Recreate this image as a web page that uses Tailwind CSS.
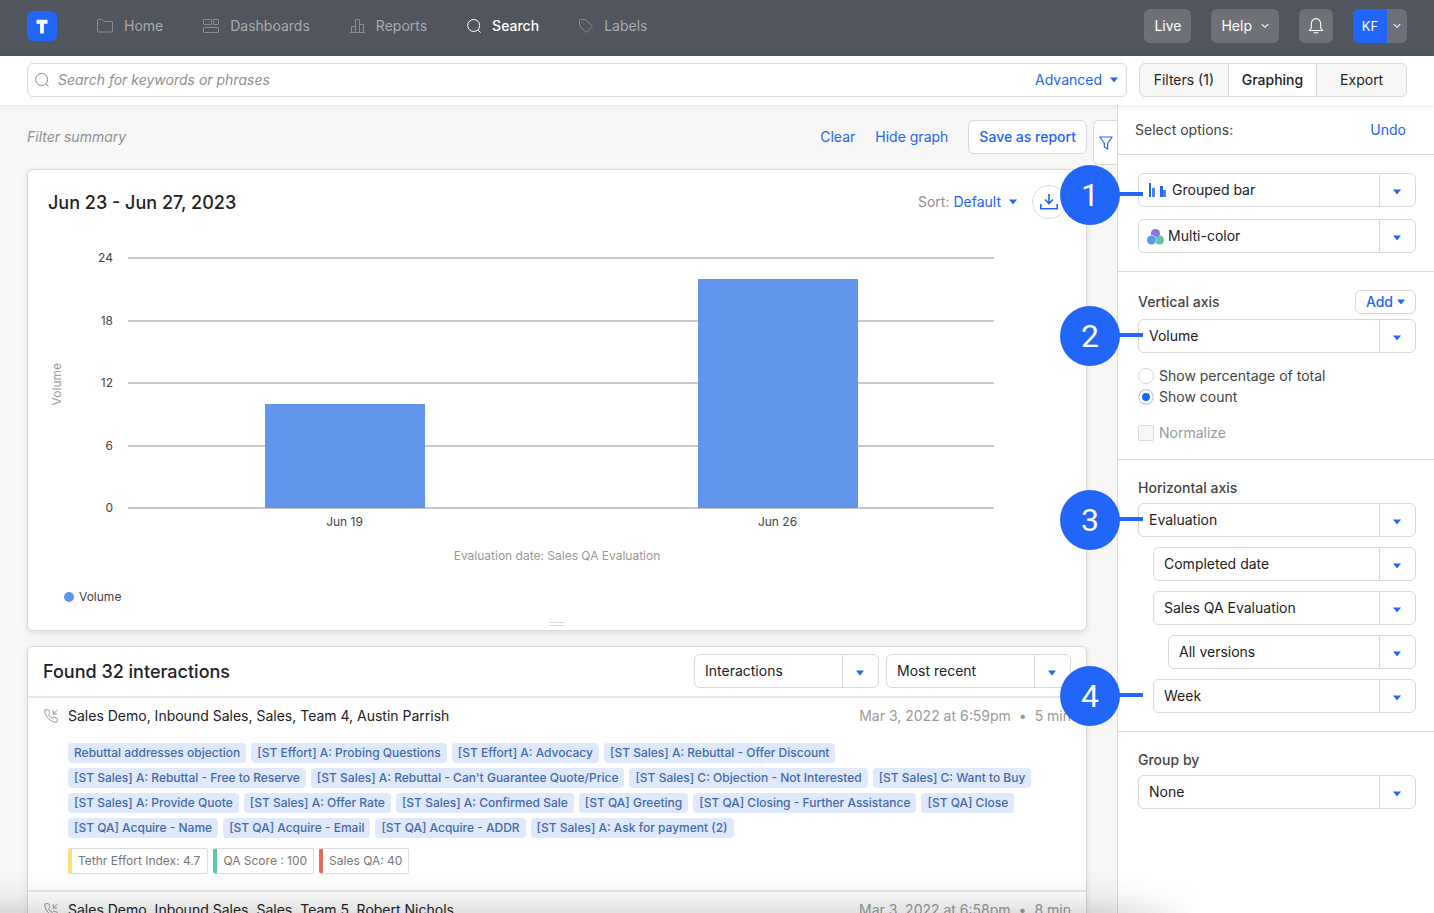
<!DOCTYPE html>
<html lang="en">
<head>
<meta charset="utf-8">
<title>Search</title>
<script src="https://cdn.jsdelivr.net/npm/@tailwindcss/browser@4"></script>
</head>
<body class="h-screen overflow-hidden flex flex-col bg-[#f7f7f7] font-['Inter',sans-serif] text-sm text-[#222]">

<svg class="hidden">
  <symbol id="caret" viewBox="0 0 8 6"><path d="M0 .4h8L4 5.6z" fill="#2166f8"/></symbol>
  <symbol id="chevron" viewBox="0 0 8 6"><path d="M.8 1.2 4 4.3 7.2 1.2" fill="none" stroke="currentColor" stroke-width="1.1"/></symbol>
  <symbol id="lens" viewBox="0 0 14 14"><g fill="none" stroke="currentColor" stroke-width="1"><circle cx="6.7" cy="6.5" r="6"/><path d="m11 11 2.6 2.6"/></g></symbol>
  <symbol id="phone" viewBox="1 1 22 22"><g fill="none" stroke="#8a8a8a" stroke-width="1.400" stroke-linejoin="round"><path d="M15.500 3v6h6M22 2.500 15.500 9"/><path d="M22 16.920v3a2 2 0 0 1-2.180 2 19.790 19.790 0 0 1-8.630-3.070 19.500 19.500 0 0 1-6-6 19.790 19.790 0 0 1-3.070-8.670A2 2 0 0 1 4.110 2h3a2 2 0 0 1 2 1.720 12.840 12.840 0 0 0 .7 2.810 2 2 0 0 1-.45 2.110L8.090 9.910a16 16 0 0 0 6 6l1.270-1.270a2 2 0 0 1 2.110-.45 12.840 12.840 0 0 0 2.810.7A2 2 0 0 1 22 16.920z"/></g></symbol>
</svg>

<header class="flex h-14 shrink-0 items-center bg-[#50555e] pl-[27px] pr-[27px] pb-1">
  <a href="#" aria-label="Home page" class="flex size-[30px] items-center justify-center rounded-md bg-[#2166f8]">
    <svg class="size-[30px]" viewBox="0 0 30 30"><path d="M9.500 8.700h11v4h-3.600v9.800h-3.800v-9.800H9.500z" fill="#fff"/></svg>
  </a>
  <nav class="ml-10 flex items-center gap-10 text-[#a9abae]">
    <a href="#" class="flex items-center gap-[11px]">
      <svg class="h-4 w-4 text-[#8b8e92]" viewBox="0 0 16 16" fill="none" stroke="currentColor"><path d="M.5 2.500q0-1 1-1h3.600l2 2H14.500q1 0 1 1v8.500q0 1-1 1h-13q-1 0-1-1z"/></svg>
      Home</a>
    <a href="#" class="flex items-center gap-[11px]">
      <svg class="h-4 w-4 text-[#8b8e92]" viewBox="0 0 16 16" fill="none" stroke="currentColor"><rect x=".5" y="1.500" width="8" height="5" rx=".5"/><rect x="10.500" y="1.500" width="5" height="5" rx=".5"/><rect x=".5" y="9.500" width="15" height="5" rx=".5"/></svg>
      Dashboards</a>
    <a href="#" class="flex items-center gap-[11px]">
      <svg class="h-4 w-[15px] text-[#8b8e92]" viewBox="0 0 15 16" fill="none" stroke="currentColor"><path d="M0 14.500h15M1.500 14.500V8.500h4M5.500 14.500V1.500h4v13M9.500 6.500h4v8"/></svg>
      Reports</a>
    <a href="#" aria-current="page" class="flex items-center gap-[11px] font-medium text-white">
      <svg class="size-[14px]"><use href="#lens"/></svg>
      Search</a>
    <a href="#" class="flex items-center gap-[11px]">
      <svg class="size-[14px] text-[#8b8e92]" viewBox="0 0 14 14" fill="none" stroke="currentColor"><path d="M.5 1.500q0-1 1-1h5L13 6.700q.5.500 0 1L7.700 13q-.5.500-1 0L.5 7z"/><circle cx="3.500" cy="3.500" r=".3"/></svg>
      Labels</a>
  </nav>
  <div class="ml-auto flex items-center gap-5 text-white">
    <button class="h-[34px] rounded-md bg-[#6e7278] px-[10px]">Live</button>
    <button class="flex h-[34px] items-center gap-[9px] rounded-md bg-[#6e7278] px-[10px]">Help <svg class="h-[6px] w-2"><use href="#chevron"/></svg></button>
    <button aria-label="Notifications" class="flex size-[34px] items-center justify-center rounded-md bg-[#6e7278]">
      <svg class="h-4 w-4" viewBox="0 0 16 16" fill="none" stroke="#fff" stroke-width="1.100"><path d="M1.500 12.500h13l-1.800-2.500V5.800a4.700 5.200 0 0 0-9.400 0V10zM5.800 14.300q2.200 1.400 4.400 0"/></svg>
    </button>
    <button class="flex h-[34px] overflow-hidden rounded-md bg-[#6e7278] text-[13px]"><span class="flex h-full w-[34px] items-center justify-center bg-[#2166f8]">KF</span><span class="flex h-full w-5 items-center justify-center"><svg class="h-[6px] w-2"><use href="#chevron"/></svg></span></button>
  </div>
</header>

<div class="z-10 flex shrink-0 gap-3 bg-white px-[27px] pt-[7px] pb-2 shadow-[0_1px_6px_rgba(0,0,0,0.08)]">
  <form class="flex h-[34px] flex-1 items-center rounded-md border border-[#d9d9d9] pl-[7px] pr-2">
    <svg class="size-[14px] shrink-0 text-[#8a8a8a]"><use href="#lens"/></svg>
    <input type="search" aria-label="Search" placeholder="Search for keywords or phrases" class="ml-[9px] h-full min-w-0 flex-1 pb-[2px] italic outline-none placeholder:text-[#8f8f8f]">
    <button type="button" class="flex items-center gap-2 text-[#2166f8]">Advanced <svg class="h-[6px] w-2"><use href="#caret"/></svg></button>
  </form>
  <div class="grid h-[34px] w-[268px] grid-cols-3 divide-x divide-[#d9d9d9] overflow-hidden rounded-md border border-[#d9d9d9] bg-[#f7f7f7]">
    <button>Filters (1)</button>
    <button class="bg-white font-medium">Graphing</button>
    <button>Export</button>
  </div>
</div>

<div class="flex min-h-0 flex-1">
  <main class="min-w-0 flex-1 overflow-hidden pt-[15px] pl-[27px]">
    <div class="flex h-[49px] items-start">
      <p class="flex-1 leading-[34px] italic text-[#8f8f8f]">Filter summary</p>
      <div class="flex items-center gap-5 text-[#2166f8]">
        <a href="#">Clear</a>
        <a href="#">Hide graph</a>
        <button class="h-[34px] rounded-md border border-[#d9d9d9] bg-white px-[10px] font-medium">Save as report</button>
      </div>
      <button aria-label="Show filters" class="ml-[6px] flex h-[45px] w-6 items-center justify-center rounded-l-md border border-r-0 border-[#d9d9d9] bg-white">
        <svg class="h-[14px] w-[14px]" viewBox="0 0 14 14" fill="none" stroke="#2166f8" stroke-width="1.200" stroke-linejoin="round"><path d="M.8 1h12.400L8.700 7v6L5.300 11V7z"/></svg>
      </button>
    </div>

    <section class="mr-[30px] rounded-md border border-[#d9d9d9] bg-white px-5 pt-[15px] shadow-[0_2px_6px_rgba(0,0,0,0.1)]">
      <div class="flex items-center">
        <h2 class="flex-1 pt-[2px] text-lg font-medium">Jun 23 - Jun 27, 2023</h2>
        <span class="text-[#8f8f8f]">Sort:</span>
        <button class="ml-1 flex items-center gap-2 text-[#2166f8]">Default <svg class="h-[6px] w-2"><use href="#caret"/></svg></button>
        <button aria-label="Download" class="ml-[15px] flex size-[34px] items-center justify-center rounded-full border border-[#d9d9d9]">
          <svg class="h-4 w-[18px]" viewBox="0 0 18 16" fill="none" stroke="#2166f8" stroke-width="1.600"><path d="M9 0v9M5 5.500l4 4 4-4M.8 10v4.700h16.400V10"/></svg>
        </button>
      </div>

      <figure class="mt-7 grid grid-cols-[18px_47px_1fr] pr-[72px] text-xs">
        <div class="flex items-center justify-center pt-[2px]"><span class="rotate-180 text-[#999] [writing-mode:vertical-rl]">Volume</span></div>
        <div class="flex flex-col justify-between text-right leading-[22px] text-[#444]"><span>24</span><span>18</span><span>12</span><span>6</span><span>0</span></div>
        <div class="ml-[15px] grid py-[10px]">
          <div class="col-start-1 row-start-1 flex h-[252px] flex-col justify-between">
            <i class="h-[2px] bg-[#c8c8c8]"></i><i class="h-[2px] bg-[#c8c8c8]"></i><i class="h-[2px] bg-[#c8c8c8]"></i><i class="h-[2px] bg-[#c8c8c8]"></i><i class="h-[2px] bg-[#c8c8c8]"></i>
          </div>
          <div class="z-0 col-start-1 row-start-1 mt-px mb-px grid h-[250px] grid-cols-2 items-end justify-items-center">
            <div class="w-[160px] bg-[#6194eb]" style="height:41.67%"></div>
            <div class="w-[160px] bg-[#6194eb]" style="height:91.67%"></div>
          </div>
        </div>
        <div class="col-start-3 -mt-[5px] ml-[15px] grid grid-cols-2 text-center leading-4 text-[#444]"><span>Jun 19</span><span>Jun 26</span></div>
      </figure>
      <p class="mt-[18px] text-center text-xs text-[#999]">Evaluation date: Sales QA Evaluation</p>
      <p class="mt-[25px] ml-4 flex items-center gap-[5px] text-xs text-[#444]"><i class="size-[10px] rounded-full bg-[#6194eb]"></i>Volume</p>
      <div class="mx-auto mt-[17px] mb-[4px] h-1 w-4 border-y border-[#d9d9d9]"></div>
    </section>

    <section class="mt-[15px] mr-[30px] rounded-t-md border border-[#d9d9d9] bg-white shadow-[0_2px_6px_rgba(0,0,0,0.1)]">
      <div class="flex items-center gap-[7px] border-b-2 border-[#e8e8e8] px-[15px] pt-[7px] pb-2">
        <h2 class="flex-1 pt-[2px] text-lg font-medium">Found 32 interactions</h2>
        <div class="relative w-[185px]">
          <select aria-label="Result type" class="h-[34px] w-full appearance-none rounded-md border border-[#d9d9d9] bg-white px-[10px]"><option>Interactions</option></select>
          <span class="pointer-events-none absolute inset-y-0 right-0 flex w-[37px] items-center justify-center border-l border-[#d9d9d9] pt-[3px] pr-[2px]"><svg class="h-[6px] w-2"><use href="#caret"/></svg></span>
        </div>
        <div class="relative w-[185px]">
          <select aria-label="Order" class="h-[34px] w-full appearance-none rounded-md border border-[#d9d9d9] bg-white px-[10px]"><option>Most recent</option></select>
          <span class="pointer-events-none absolute inset-y-0 right-0 flex w-[37px] items-center justify-center border-l border-[#d9d9d9] pt-[3px] pr-[2px]"><svg class="h-[6px] w-2"><use href="#caret"/></svg></span>
        </div>
      </div>

      <article class="border-b-2 border-[#e8e8e8] px-[15px] pt-2 pb-4">
        <div class="flex items-center leading-5">
          <svg class="mr-[10px] ml-px size-[14px]"><use href="#phone"/></svg>
          <a href="#" class="flex-1">Sales Demo, Inbound Sales, Sales, Team 4, Austin Parrish</a>
          <span class="flex gap-2 text-[#999]"><span>Mar 3, 2022 at 6:59pm</span><span>•</span><span>5 min</span></span>
        </div>
        <ul class="mt-[17px] ml-[25px] flex flex-wrap gap-[5px] text-xs font-medium leading-5 text-[#4369ab]">
          <li class="rounded bg-[#dfe9fb] px-[6px]">Rebuttal addresses objection</li>
          <li class="rounded bg-[#dfe9fb] px-[6px]">[ST Effort] A: Probing Questions</li>
          <li class="rounded bg-[#dfe9fb] px-[6px]">[ST Effort] A: Advocacy</li>
          <li class="rounded bg-[#dfe9fb] px-[6px]">[ST Sales] A: Rebuttal - Offer Discount</li>
          <li class="rounded bg-[#dfe9fb] px-[6px]">[ST Sales] A: Rebuttal - Free to Reserve</li>
          <li class="rounded bg-[#dfe9fb] px-[6px]">[ST Sales] A: Rebuttal - Can't Guarantee Quote/Price</li>
          <li class="rounded bg-[#dfe9fb] px-[6px]">[ST Sales] C: Objection - Not Interested</li>
          <li class="rounded bg-[#dfe9fb] px-[6px]">[ST Sales] C: Want to Buy</li>
          <li class="rounded bg-[#dfe9fb] px-[6px]">[ST Sales] A: Provide Quote</li>
          <li class="rounded bg-[#dfe9fb] px-[6px]">[ST Sales] A: Offer Rate</li>
          <li class="rounded bg-[#dfe9fb] px-[6px]">[ST Sales] A: Confirmed Sale</li>
          <li class="rounded bg-[#dfe9fb] px-[6px]">[ST QA] Greeting</li>
          <li class="rounded bg-[#dfe9fb] px-[6px]">[ST QA] Closing - Further Assistance</li>
          <li class="rounded bg-[#dfe9fb] px-[6px]">[ST QA] Close</li>
          <li class="rounded bg-[#dfe9fb] px-[6px]">[ST QA] Acquire - Name</li>
          <li class="rounded bg-[#dfe9fb] px-[6px]">[ST QA] Acquire - Email</li>
          <li class="rounded bg-[#dfe9fb] px-[6px]">[ST QA] Acquire - ADDR</li>
          <li class="rounded bg-[#dfe9fb] px-[6px]">[ST Sales] A: Ask for payment (2)</li>
        </ul>
        <ul class="mt-[10px] ml-[25px] flex gap-[5px] text-xs leading-6 text-[#777]">
          <li class="flex overflow-hidden rounded-xs border border-l-0 border-[#dcdcdc]"><i class="w-1 bg-[#fbe07a]"></i><span class="pr-[7px] pl-[6px]">Tethr Effort Index: 4.7</span></li>
          <li class="flex overflow-hidden rounded-xs border border-l-0 border-[#dcdcdc]"><i class="w-1 bg-[#5cc8a0]"></i><span class="px-[6px]">QA Score : 100</span></li>
          <li class="flex overflow-hidden rounded-xs border border-l-0 border-[#dcdcdc]"><i class="w-1 bg-[#e26a60]"></i><span class="px-[6px]">Sales QA: 40</span></li>
        </ul>
      </article>
      <article class="px-[15px] pt-2 pb-4">
        <div class="flex items-center leading-5">
          <svg class="mr-[10px] ml-px size-[14px]"><use href="#phone"/></svg>
          <a href="#" class="flex-1">Sales Demo, Inbound Sales, Sales, Team 5, Robert Nichols</a>
          <span class="flex gap-2 text-[#999]"><span>Mar 3, 2022 at 6:58pm</span><span>•</span><span>8 min</span></span>
        </div>
      </article>
    </section>
  </main>

  <aside class="w-[317px] shrink-0 border-l border-[#d9d9d9] bg-white">
    <div class="flex h-[50px] items-center justify-between border-b border-[#d9d9d9] pr-7 pl-[17px] text-[#444]">
      <span>Select options:</span><a href="#" class="text-[#2166f8]">Undo</a>
    </div>

    <div class="flex flex-col gap-3 border-b border-[#d9d9d9] py-[18px] pr-[18px] pl-5">
      <div class="relative">
        <select aria-label="Chart type" class="h-[34px] w-full appearance-none rounded-md border border-[#d9d9d9] bg-white pr-10 pl-[33px]"><option>Grouped bar</option></select>
        <svg class="pointer-events-none absolute top-[10px] left-[11px] h-[14px] w-[17px]" viewBox="0 0 17 14"><path d="M0 0h2v14H0zM11 3h3v11h-3z" fill="#2166f8"/><path d="M3 5h3v9H3zM14 7h3v7h-3z" fill="#4b82f7"/></svg>
        <span class="pointer-events-none absolute inset-y-0 right-0 flex w-[37px] items-center justify-center border-l border-[#d9d9d9] pt-[3px] pr-[2px]"><svg class="h-[6px] w-2"><use href="#caret"/></svg></span>
        <div class="absolute top-[-8px] left-[-78px] flex items-center"><b class="flex size-[60px] items-center justify-center rounded-full bg-[#2166f8] pt-[2px] font-['Roboto',sans-serif] text-[32px] font-normal text-white">1</b><i class="mb-[2px] -ml-px h-1 w-6 bg-[#2166f8]"></i></div>
      </div>
      <div class="relative">
        <select aria-label="Colors" class="h-[34px] w-full appearance-none rounded-md border border-[#d9d9d9] bg-white pr-10 pl-[29px]"><option>Multi-color</option></select>
        <svg class="pointer-events-none absolute top-[10px] left-[9px] h-4 w-[17px]" viewBox="0 0 17 16"><circle cx="8.500" cy="4.500" r="4.500" fill="#8573e2"/><circle cx="12.500" cy="11" r="4.500" fill="#5cc8a0"/><circle cx="4.500" cy="11" r="5" fill="#fff"/><circle cx="4.500" cy="11" r="4.500" fill="#6194eb"/></svg>
        <span class="pointer-events-none absolute inset-y-0 right-0 flex w-[37px] items-center justify-center border-l border-[#d9d9d9] pt-[3px] pr-[2px]"><svg class="h-[6px] w-2"><use href="#caret"/></svg></span>
      </div>
    </div>

    <div class="border-b border-[#d9d9d9] pt-[18px] pr-[18px] pb-4 pl-5 text-[#444]">
      <div class="flex h-6 items-center justify-between">
        <label for="vaxis" class="font-medium">Vertical axis</label>
        <button class="flex h-6 items-center gap-1 rounded-md border border-[#d9d9d9] px-[10px] font-medium text-[#2166f8]">Add <svg class="h-[6px] w-2"><use href="#caret"/></svg></button>
      </div>
      <div class="relative mt-[5px]">
        <select id="vaxis" class="h-[34px] w-full appearance-none rounded-md border border-[#d9d9d9] bg-white px-[10px] text-[#222]"><option>Volume</option></select>
        <span class="pointer-events-none absolute inset-y-0 right-0 flex w-[37px] items-center justify-center border-l border-[#d9d9d9] pt-[3px] pr-[2px]"><svg class="h-[6px] w-2"><use href="#caret"/></svg></span>
        <div class="absolute top-[-13px] left-[-78px] flex items-center"><b class="flex size-[60px] items-center justify-center rounded-full bg-[#2166f8] pt-[2px] font-['Roboto',sans-serif] text-[32px] font-normal text-white">2</b><i class="mb-[2px] -ml-px h-1 w-6 bg-[#2166f8]"></i></div>
      </div>
      <div class="mt-3 leading-[21px]">
        <label class="flex items-center gap-[5px]"><input type="radio" name="show" class="size-4 appearance-none rounded-full border border-[#d9d9d9]">Show percentage of total</label>
        <label class="flex items-center gap-[5px]"><input type="radio" name="show" checked class="size-4 appearance-none rounded-full border border-[#d9d9d9] bg-[#2166f8] ring-3 ring-white ring-inset">Show count</label>
      </div>
      <label class="mt-[15px] flex items-center gap-[5px] leading-[21px] text-[#999]"><input type="checkbox" disabled class="size-4 appearance-none rounded-xs border border-[#d9d9d9] bg-[#f7f7f7]">Normalize</label>
    </div>

    <div class="border-b border-[#d9d9d9] py-[18px] pr-[18px] pl-5">
      <label for="haxis" class="block leading-5 font-medium text-[#444]">Horizontal axis</label>
      <div class="mt-[5px] flex flex-col gap-[10px]">
        <div class="relative">
          <select id="haxis" class="h-[34px] w-full appearance-none rounded-md border border-[#d9d9d9] bg-white px-[10px]"><option>Evaluation</option></select>
          <span class="pointer-events-none absolute inset-y-0 right-0 flex w-[37px] items-center justify-center border-l border-[#d9d9d9] pt-[3px] pr-[2px]"><svg class="h-[6px] w-2"><use href="#caret"/></svg></span>
          <div class="absolute top-[-13px] left-[-78px] flex items-center"><b class="flex size-[60px] items-center justify-center rounded-full bg-[#2166f8] pt-[2px] font-['Roboto',sans-serif] text-[32px] font-normal text-white">3</b><i class="mb-[2px] -ml-px h-1 w-6 bg-[#2166f8]"></i></div>
        </div>
        <div class="relative ml-[15px]">
          <select aria-label="Date" class="h-[34px] w-full appearance-none rounded-md border border-[#d9d9d9] bg-white px-[10px]"><option>Completed date</option></select>
          <span class="pointer-events-none absolute inset-y-0 right-0 flex w-[37px] items-center justify-center border-l border-[#d9d9d9] pt-[3px] pr-[2px]"><svg class="h-[6px] w-2"><use href="#caret"/></svg></span>
        </div>
        <div class="relative ml-[15px]">
          <select aria-label="Evaluation form" class="h-[34px] w-full appearance-none rounded-md border border-[#d9d9d9] bg-white px-[10px]"><option>Sales QA Evaluation</option></select>
          <span class="pointer-events-none absolute inset-y-0 right-0 flex w-[37px] items-center justify-center border-l border-[#d9d9d9] pt-[3px] pr-[2px]"><svg class="h-[6px] w-2"><use href="#caret"/></svg></span>
        </div>
        <div class="relative ml-[30px]">
          <select aria-label="Version" class="h-[34px] w-full appearance-none rounded-md border border-[#d9d9d9] bg-white px-[10px]"><option>All versions</option></select>
          <span class="pointer-events-none absolute inset-y-0 right-0 flex w-[37px] items-center justify-center border-l border-[#d9d9d9] pt-[3px] pr-[2px]"><svg class="h-[6px] w-2"><use href="#caret"/></svg></span>
        </div>
        <div class="relative ml-[15px]">
          <select aria-label="Interval" class="h-[34px] w-full appearance-none rounded-md border border-[#d9d9d9] bg-white px-[10px]"><option>Week</option></select>
          <span class="pointer-events-none absolute inset-y-0 right-0 flex w-[37px] items-center justify-center border-l border-[#d9d9d9] pt-[3px] pr-[2px]"><svg class="h-[6px] w-2"><use href="#caret"/></svg></span>
          <div class="absolute top-[-13px] left-[-93px] flex items-center"><b class="flex size-[60px] items-center justify-center rounded-full bg-[#2166f8] pt-[2px] font-['Roboto',sans-serif] text-[32px] font-normal text-white">4</b><i class="mb-[2px] -ml-px h-1 w-6 bg-[#2166f8]"></i></div>
        </div>
      </div>
    </div>

    <div class="pt-[18px] pr-[18px] pl-5">
      <label for="group" class="block leading-5 font-medium text-[#444]">Group by</label>
      <div class="relative mt-[5px]">
        <select id="group" class="h-[34px] w-full appearance-none rounded-md border border-[#d9d9d9] bg-white px-[10px]"><option>None</option></select>
        <span class="pointer-events-none absolute inset-y-0 right-0 flex w-[37px] items-center justify-center border-l border-[#d9d9d9] pt-[3px] pr-[2px]"><svg class="h-[6px] w-2"><use href="#caret"/></svg></span>
      </div>
    </div>
  </aside>
</div>
<div class="pointer-events-none fixed inset-x-0 bottom-0 h-10 bg-linear-to-t from-black/12 via-black/3 to-transparent [mask-image:linear-gradient(to_right,black_77%,transparent_84%)]"></div>
</body>
</html>
